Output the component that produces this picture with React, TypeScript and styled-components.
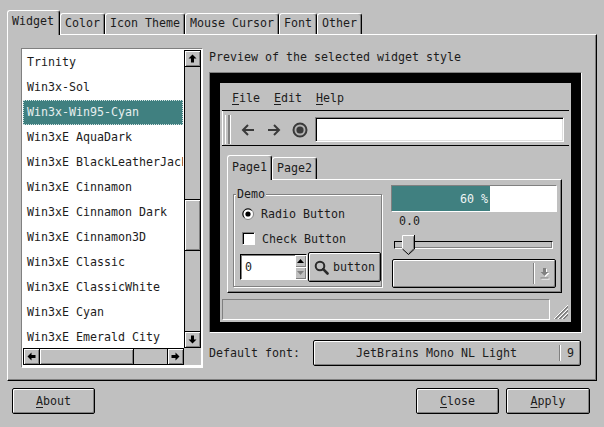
import React from "react";
import styled, { createGlobalStyle, css } from "styled-components";

const GlobalStyle = createGlobalStyle`
  html, body {
    margin: 0;
    padding: 0;
    background: #c0c0c0;
  }
  body {
    font-family: "DejaVu Sans Mono", "Liberation Mono", monospace;
    font-size: 11.63px;
    color: #1c1c1c;
  }
  * {
    box-sizing: border-box;
  }
`;

const raised = css`
  border: 1px solid #000;
  background: #c0c0c0;
  box-shadow: inset 1px 1px 0 #fff, inset -1px -1px 0 #808080;
`;

const sunken = css`
  border: 1px solid;
  border-color: #808080 #fff #fff #808080;
`;

const etchedV = css`
  width: 2px;
  border-left: 1px solid #808080;
  border-right: 1px solid #fff;
`;

const Window = styled.div`
  width: 604px;
  height: 427px;
  padding: 0 7px;
  display: flex;
  flex-direction: column;
  overflow: hidden;
`;

const TabBar = styled.div`
  display: flex;
  align-items: flex-end;
  height: 34px;
`;

const Tab = styled.div<{ $active?: boolean }>`
  position: relative;
  z-index: ${p => (p.$active ? 2 : 0)};
  height: ${p => (p.$active ? 25 : 21)}px;
  margin-bottom: ${p => (p.$active ? -1 : 0)}px;
  padding: ${p => (p.$active ? "0 5px 0 4px" : "0 4px")};
  border: 1px solid;
  border-color: #fff #000 transparent #fff;
  border-bottom: none;
  border-radius: 3px 3px 0 0;
  box-shadow: inset -1px 0 0 #808080;
  background: #c0c0c0;
  line-height: ${p => (p.$active ? 21 : 19)}px;
  white-space: nowrap;
`;

const Pane = styled.div`
  height: 347px;
  border: 1px solid;
  border-color: #fff #000 #000 #fff;
  box-shadow: inset -1px -1px 0 #808080;
  display: flex;
  gap: 6px;
  padding: 13px 0 0 13px;
`;

/* ---------- style list ---------- */

const ListBox = styled.div`
  width: 182px;
  height: 320px;
  ${sunken};
  background: #fff;
  display: grid;
  grid-template-columns: 162px 17px 1fr;
  grid-template-rows: 299px 17px 1fr;
`;

const Items = styled.div`
  padding: 1px;
  overflow: hidden;
`;

const Item = styled.div<{ $selected?: boolean }>`
  height: 25px;
  line-height: 25px;
  padding-left: 4px;
  white-space: nowrap;
  overflow: hidden;
  ${p =>
    p.$selected &&
    css`
      background: #408080;
      color: #e6eeee;
      outline: 1px dotted #d4e4e4;
      outline-offset: -1px;
    `}
`;

const VScroll = styled.div`
  margin-top: 1px;
  border: 1px solid #000;
  background: #c0c0c0;
  display: flex;
  flex-direction: column;
`;

const HScroll = styled.div`
  margin-left: 1px;
  border: 1px solid #000;
  background: #c0c0c0;
  display: flex;
`;

const Corner = styled.div`
  background: #c0c0c0;
`;

const ScrollBtn = styled.div<{ $edge: "top" | "bottom" | "left" | "right" }>`
  flex: 0 0 auto;
  width: ${p => (p.$edge === "left" || p.$edge === "right" ? 16 : 15)}px;
  height: ${p => (p.$edge === "top" || p.$edge === "bottom" ? 16 : 15)}px;
  display: flex;
  align-items: center;
  justify-content: center;
  box-shadow: inset 1px 1px 0 #fff, inset -1px -1px 0 #808080;
  ${p => `border-${p.$edge === "top" ? "bottom" : p.$edge === "bottom" ? "top" : p.$edge === "left" ? "right" : "left"}: 1px solid #000;`}
`;

const Track = styled.div<{ $size?: number }>`
  flex: ${p => (p.$size ? `0 0 ${p.$size}px` : "1 1 auto")};
`;

const VThumb = styled.div`
  flex: 0 0 52px;
  border-top: 1px solid #000;
  border-bottom: 1px solid #000;
  box-shadow: inset 1px 1px 0 #fff, inset -1px -1px 0 #808080;
`;

const HThumb = styled.div`
  flex: 0 0 94px;
  border-right: 1px solid #000;
  box-shadow: inset 1px 1px 0 #fff, inset -1px -1px 0 #808080;
`;

const ArrowSvg = styled.svg<{ $rot: number }>`
  display: block;
  transform: rotate(${p => p.$rot}deg);
`;

const Arrow = ({ dir }: { dir: "up" | "down" | "left" | "right" }) => {
  const rot = { up: 0, right: 90, down: 180, left: 270 }[dir];
  return (
    <ArrowSvg $rot={rot} width="9" height="9" viewBox="0 0 9 9">
      <polygon points="4.5,0.5 8.5,4.5 6,4.5 6,8.5 3,8.5 3,4.5 0.5,4.5" fill="#000" />
    </ArrowSvg>
  );
};

/* ---------- right side ---------- */

const RightCol = styled.div`
  width: 373px;
  display: flex;
  flex-direction: column;
`;

const Caption = styled.div`
  height: 18px;
  line-height: 18px;
`;

const PreviewFrame = styled.div`
  margin-top: 6px;
  height: 261px;
  border: 1px solid;
  border-color: #808080 #fff #fff #808080;
  background: #000;
  padding: 10px;
`;

const InnerWindow = styled.div`
  height: 239px;
  background: #c0c0c0;
  display: flex;
  flex-direction: column;
`;

const MenuBar = styled.div`
  height: 27px;
  padding: 3px 0 0 5px;
  display: flex;
  align-items: center;
`;

const MenuItem = styled.span`
  padding: 0 7px;
`;

const Mn = styled.span`
  text-decoration: underline;
  text-underline-offset: 2px;
`;

const Toolbar = styled.div`
  height: 36px;
  margin: 0 2px;
  padding: 3px 0 0 3px;
  border-top: 1px solid #000;
  border-bottom: 1px solid #000;
  box-shadow: inset 1px 0 0 #fff;
  display: flex;
  align-items: center;
`;

const Handle = styled.div`
  width: 5px;
  height: 29px;
  margin-right: 5px;
  border-left: 1px solid #fff;
  border-right: 1px solid #808080;
  box-shadow: inset -1px 0 0 #808080, 1px 0 0 #fff;
`;

const ToolIcon = styled.div`
  width: 26px;
  display: flex;
  justify-content: center;
`;

const UrlInput = styled.div`
  margin-left: 2px;
  width: 249px;
  height: 25px;
  background: #fff;
  border: 1px solid;
  border-color: #808080 #fff #fff #808080;
  box-shadow: inset 1px 1px 0 #000, inset -1px -1px 0 #dfdfdf;
`;

const TabWidget = styled.div`
  margin: 9px 0 0 7px;
  width: 335px;
  display: flex;
  flex-direction: column;
`;

const PageTabs = styled.div`
  height: 24px;
  display: flex;
  align-items: flex-end;
`;

const PageTab = styled(Tab)`
  height: ${p => (p.$active ? 25 : 22)}px;
  padding: 0 4px;
  line-height: ${p => (p.$active ? 22 : 20)}px;
`;

const PagePane = styled.div`
  height: 114px;
  border: 1px solid;
  border-color: #fff #000 #000 #fff;
  box-shadow: inset -1px -1px 0 #808080;
  display: flex;
  gap: 9px;
  padding: 5px 0 0 5px;
`;

const GroupBox = styled.div`
  margin-top: 9px;
  width: 149px;
  height: 93px;
  border: 1px solid #808080;
  box-shadow: inset 1px 1px 0 #fff, 1px 1px 0 #fff;
  display: flex;
  flex-direction: column;
  padding: 0 0 0 6px;
`;

const GroupTitle = styled.span`
  align-self: flex-start;
  margin: -8px 0 0 -4px;
  padding: 0 1px;
  line-height: 14px;
  background: #c0c0c0;
`;

const OptionRow = styled.div`
  height: 25px;
  padding-left: 2px;
  display: flex;
  align-items: center;
  gap: 7px;
`;

const CheckBox = styled.span`
  width: 13px;
  height: 13px;
  background: #fff;
  border: 1px solid;
  border-color: #808080 #fff #fff #808080;
  box-shadow: inset 1px 1px 0 #000;
`;

const SpinRow = styled.div`
  margin-top: 1px;
  display: flex;
  align-items: center;
  gap: 1px;
`;

const SpinBox = styled.div`
  width: 67px;
  height: 26px;
  display: flex;
  background: #fff;
  border: 1px solid;
  border-color: #000 #fff #fff #000;
  box-shadow: inset 1px 1px 0 #808080;
`;

const SpinField = styled.div`
  flex: 1;
  padding-left: 4px;
  line-height: 24px;
`;

const SpinButtons = styled.div`
  width: 11px;
  display: flex;
  flex-direction: column;
`;

const SpinBtn = styled.div`
  flex: 1;
  display: flex;
  align-items: center;
  justify-content: center;
  background: #c0c0c0;
  box-shadow: inset 1px 1px 0 #fff, inset -1px -1px 0 #808080;
`;

const PushButton = styled.div<{ $w: number; $h?: number }>`
  ${raised};
  border-radius: 2px;
  width: ${p => p.$w}px;
  height: ${p => p.$h ?? 26}px;
  display: flex;
  align-items: center;
  justify-content: center;
  gap: 4px;
  white-space: nowrap;
`;

const RightPart = styled.div`
  width: 166px;
  display: flex;
  flex-direction: column;
`;

const Progress = styled.div`
  height: 27px;
  ${sunken};
  background: #fff;
  display: grid;
`;

const ProgressFill = styled.div`
  grid-area: 1 / 1;
  background: #408080;
`;

const ProgressText = styled.div`
  grid-area: 1 / 1;
  justify-self: center;
  align-self: center;
  color: #eef4f4;
`;

const ValueLabel = styled.div`
  margin: 2px 0 0 8px;
  line-height: 14px;
`;

const Slider = styled.div`
  position: relative;
  margin-top: 7px;
  height: 20px;
`;

const Groove = styled.div`
  margin: 6px 4px 0 3px;
  height: 8px;
  background: #c0c0c0;
  border: 1px solid;
  border-color: #000 #fff #fff #000;
  box-shadow: inset -1px -1px 0 #808080;
`;

const SliderHandle = styled.svg`
  position: absolute;
  left: 11px;
  top: 0;
`;

const Combo = styled.div`
  ${raised};
  border-radius: 2px;
  margin: 4px 0 0 1px;
  width: 164px;
  height: 29px;
  display: flex;
`;

const ComboText = styled.div`
  flex: 1;
`;

const Sep = styled.div<{ $inset: number }>`
  ${etchedV};
  margin: ${p => p.$inset}px 0;
`;

const ComboArrow = styled.div`
  width: 20px;
  display: flex;
  align-items: center;
  justify-content: center;
`;

const StatusBar = styled.div`
  margin-top: 4px;
  height: 25px;
  padding: 2px;
  display: flex;
`;

const StatusField = styled.div`
  width: 328px;
  ${sunken};
`;

const Grip = styled.svg`
  align-self: flex-end;
  margin: 0 0 1px 3px;
`;

const FontRow = styled.div`
  margin-top: 7px;
  height: 26px;
  display: flex;
  align-items: center;
`;

const FontLabel = styled.div`
  width: 104px;
`;

const FontButton = styled.div`
  ${raised};
  border-radius: 2px;
  width: 268px;
  height: 26px;
  display: flex;
`;

const FontName = styled.div`
  flex: 1;
  display: flex;
  align-items: center;
  justify-content: center;
`;

const FontSize = styled.div`
  width: 19px;
  display: flex;
  align-items: center;
  justify-content: center;
`;

const ButtonRow = styled.div`
  margin-top: 7px;
  height: 26px;
  padding: 0 7px 0 5px;
  display: flex;
  gap: 7px;
`;

const Spacer = styled.div`
  flex: 1;
`;

/* ---------- icons ---------- */

const ic = "#3a3a3a";

const BackIcon = () => (
  <svg width="14" height="14" viewBox="0 0 14 14">
    <path d="M13 7H2M7 2L2 7l5 5" stroke={ic} strokeWidth="2" fill="none" />
  </svg>
);

const ForwardIcon = () => (
  <svg width="14" height="14" viewBox="0 0 14 14">
    <path d="M1 7h11M7 2l5 5-5 5" stroke={ic} strokeWidth="2" fill="none" />
  </svg>
);

const StopIcon = () => (
  <svg width="16" height="16" viewBox="0 0 16 16">
    <circle cx="8" cy="8" r="6.5" stroke={ic} strokeWidth="2" fill="#b0b0b0" />
    <circle cx="8" cy="8" r="3.6" fill={ic} />
  </svg>
);

const SearchIcon = () => (
  <svg width="15" height="15" viewBox="0 0 15 15">
    <circle cx="6" cy="6" r="4.3" stroke="#2a2a2a" strokeWidth="2" fill="none" />
    <line x1="9.2" y1="9.2" x2="13.5" y2="13.5" stroke="#2a2a2a" strokeWidth="2.6" strokeLinecap="round" />
  </svg>
);

const Radio = () => (
  <svg width="12" height="12" viewBox="0 0 12 12">
    <circle cx="6" cy="6" r="5.5" fill="#fff" stroke="#808080" />
    <path d="M2.4 9.6A5 5 0 0 1 9.6 2.4" stroke="#000" fill="none" />
    <circle cx="6" cy="6" r="2.6" fill="#000" />
  </svg>
);

const SpinArrow = ({ up }: { up?: boolean }) => (
  <svg width="7" height="4" viewBox="0 0 7 4">
    <polygon points={up ? "3.5,0 7,4 0,4" : "0,0 7,0 3.5,4"} fill={up ? "#000" : "#808080"} />
  </svg>
);

const DisabledDown = () => (
  <svg width="10" height="12" viewBox="0 0 10 12">
    <g transform="translate(1 1)" fill="#fff">
      <polygon points="3,0 6,0 6,4 8.5,4 4.5,8 0.5,4 3,4" />
      <rect x="0.5" y="9.5" width="8" height="1" />
    </g>
    <g fill="#808080">
      <polygon points="3,0 6,0 6,4 8.5,4 4.5,8 0.5,4 3,4" />
      <rect x="0.5" y="9.5" width="8" height="1" />
    </g>
  </svg>
);

const SizeGrip = () => (
  <svg width="15" height="15" viewBox="0 0 15 15">
    {[0, 4, 8].map(k => (
      <g key={k}>
        <line x1={k + 1} y1="15" x2="15" y2={k + 1} stroke="#fff" />
        <line x1={k + 2} y1="15" x2="15" y2={k + 2} stroke="#808080" />
        <line x1={k + 3} y1="15" x2="15" y2={k + 3} stroke="#808080" />
      </g>
    ))}
  </svg>
);

const styles = [
  "Trinity",
  "Win3x-Sol",
  "Win3x-Win95-Cyan",
  "Win3xE AquaDark",
  "Win3xE BlackLeatherJacket",
  "Win3xE Cinnamon",
  "Win3xE Cinnamon Dark",
  "Win3xE Cinnamon3D",
  "Win3xE Classic",
  "Win3xE ClassicWhite",
  "Win3xE Cyan",
  "Win3xE Emerald City",
];

const tabs = ["Widget", "Color", "Icon Theme", "Mouse Cursor", "Font", "Other"];

export default function App() {
  return (
    <>
      <GlobalStyle />
      <Window>
        <TabBar>
          {tabs.map((t, i) => (
            <Tab key={t} $active={i === 0}>
              {t}
            </Tab>
          ))}
        </TabBar>
        <Pane>
          <ListBox>
            <Items>
              {styles.map(s => (
                <Item key={s} $selected={s === "Win3x-Win95-Cyan"}>
                  {s}
                </Item>
              ))}
            </Items>
            <VScroll>
              <ScrollBtn $edge="top">
                <Arrow dir="up" />
              </ScrollBtn>
              <Track $size={132} />
              <VThumb />
              <Track />
              <ScrollBtn $edge="bottom">
                <Arrow dir="down" />
              </ScrollBtn>
            </VScroll>
            <div />
            <HScroll>
              <ScrollBtn $edge="left">
                <Arrow dir="left" />
              </ScrollBtn>
              <HThumb />
              <Track />
              <ScrollBtn $edge="right">
                <Arrow dir="right" />
              </ScrollBtn>
            </HScroll>
            <Corner />
          </ListBox>

          <RightCol>
            <Caption>Preview of the selected widget style</Caption>
            <PreviewFrame>
              <InnerWindow>
                <MenuBar>
                  <MenuItem>
                    <Mn>F</Mn>ile
                  </MenuItem>
                  <MenuItem>
                    <Mn>E</Mn>dit
                  </MenuItem>
                  <MenuItem>
                    <Mn>H</Mn>elp
                  </MenuItem>
                </MenuBar>
                <Toolbar>
                  <Handle />
                  <ToolIcon>
                    <BackIcon />
                  </ToolIcon>
                  <ToolIcon>
                    <ForwardIcon />
                  </ToolIcon>
                  <ToolIcon>
                    <StopIcon />
                  </ToolIcon>
                  <UrlInput />
                </Toolbar>
                <TabWidget>
                  <PageTabs>
                    <PageTab $active>Page1</PageTab>
                    <PageTab>Page2</PageTab>
                  </PageTabs>
                  <PagePane>
                    <GroupBox>
                      <GroupTitle>Demo</GroupTitle>
                      <OptionRow>
                        <Radio />
                        Radio Button
                      </OptionRow>
                      <OptionRow>
                        <CheckBox />
                        Check Button
                      </OptionRow>
                      <SpinRow>
                        <SpinBox>
                          <SpinField>0</SpinField>
                          <SpinButtons>
                            <SpinBtn>
                              <SpinArrow up />
                            </SpinBtn>
                            <SpinBtn>
                              <SpinArrow />
                            </SpinBtn>
                          </SpinButtons>
                        </SpinBox>
                        <PushButton $w={73} $h={30}>
                          <SearchIcon />
                          button
                        </PushButton>
                      </SpinRow>
                    </GroupBox>
                    <RightPart>
                      <Progress>
                        <ProgressFill style={{ width: "60%" }} />
                        <ProgressText>60 %</ProgressText>
                      </Progress>
                      <ValueLabel>0.0</ValueLabel>
                      <Slider>
                        <Groove />
                        <SliderHandle width="13" height="20" viewBox="0 0 13 20">
                          <polygon points="0,0 13,0 13,14 6.5,20 0,14" fill="#c0c0c0" />
                          <polyline points="0.5,14 0.5,0.5 12,0.5" stroke="#fff" fill="none" />
                          <polyline points="11.5,1.5 11.5,13.6 6.5,18.2" stroke="#808080" fill="none" />
                          <polyline points="12.5,0 12.5,14 6.5,19.5 0.5,14" stroke="#000" fill="none" />
                        </SliderHandle>
                      </Slider>
                      <Combo>
                        <ComboText />
                        <Sep $inset={3} />
                        <ComboArrow>
                          <DisabledDown />
                        </ComboArrow>
                      </Combo>
                    </RightPart>
                  </PagePane>
                </TabWidget>
                <StatusBar>
                  <StatusField />
                  <Grip as="svg" width="15" height="15" viewBox="0 0 15 15">
                    <SizeGrip />
                  </Grip>
                </StatusBar>
              </InnerWindow>
            </PreviewFrame>
            <FontRow>
              <FontLabel>Default font:</FontLabel>
              <FontButton>
                <FontName>JetBrains Mono NL Light</FontName>
                <Sep $inset={4} />
                <FontSize>9</FontSize>
              </FontButton>
            </FontRow>
          </RightCol>
        </Pane>
        <ButtonRow>
          <PushButton $w={83}>
            <span>
              <Mn>A</Mn>bout
            </span>
          </PushButton>
          <Spacer />
          <PushButton $w={83}>
            <span>
              <Mn>C</Mn>lose
            </span>
          </PushButton>
          <PushButton $w={84}>
            <span>
              <Mn>A</Mn>pply
            </span>
          </PushButton>
        </ButtonRow>
      </Window>
    </>
  );
}
